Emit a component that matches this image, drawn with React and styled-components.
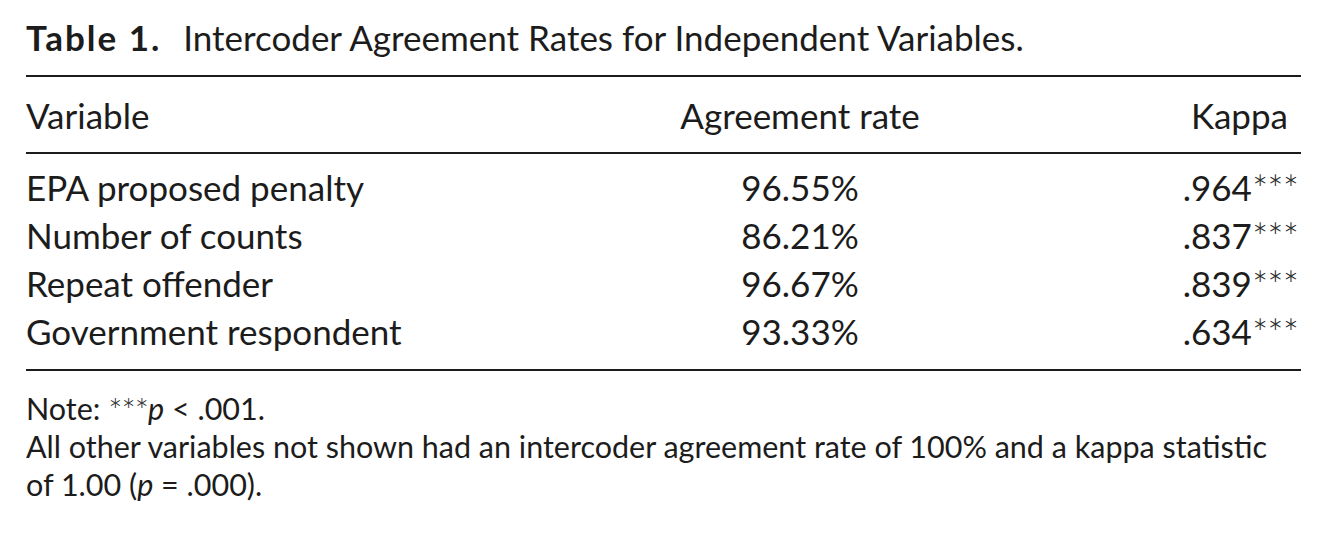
import styled, { createGlobalStyle } from 'styled-components';

const GlobalStyle = createGlobalStyle`
  body {
    margin: 0;
    background: #ffffff;
    color: #1c1c1c;
    font-family: Lato, "Open Sans", sans-serif;
  }
`;

const Page = styled.div`
  width: 1275px;
  padding: 13px 0 0 26px;
`;

const Caption = styled.div`
  font-size: 35px;
  line-height: 48px;
  margin-bottom: 14px;
  white-space: nowrap;
`;

const CaptionLabel = styled.span`
  font-weight: 700;
  letter-spacing: 2px;
  margin-right: 22px;
`;

const Table = styled.table`
  width: 100%;
  table-layout: fixed;
  border-collapse: collapse;
  border-top: 2px solid #1c1c1c;
  border-bottom: 2px solid #1c1c1c;
  font-size: 35px;
  line-height: 48px;
`;

const HeadRow = styled.tr`
  border-bottom: 2px solid #1c1c1c;
`;

const HeadCell = styled.th`
  font-weight: 400;
  white-space: nowrap;
  padding: 14px 0 13px;
  text-align: ${(p) => p.$align || 'left'};
  padding-right: ${(p) => (p.$align === 'right' ? '13px' : '0')};
  width: ${(p) => p.$width || 'auto'};
`;

const Cell = styled.td`
  padding: 0;
  white-space: nowrap;
  padding-top: ${(p) => (p.$first ? '9px' : '0')};
  padding-bottom: ${(p) => (p.$last ? '14px' : '0')};
  padding-right: ${(p) => (p.$align === 'right' ? '3px' : '0')};
  text-align: ${(p) => p.$align || 'left'};
`;

const Stars = styled.span`
  font-size: 1.1em;
  line-height: 1;
  font-weight: 300;
  letter-spacing: -1px;
  vertical-align: -0.08em;
`;

const Note = styled.div`
  margin-top: 18px;
  font-size: 30.5px;
  line-height: 38px;
  white-space: nowrap;
`;

const Ital = styled.i`
  font-style: italic;
`;

const rows = [
  ['EPA proposed penalty', '96.55%', '.964'],
  ['Number of counts', '86.21%', '.837'],
  ['Repeat offender', '96.67%', '.839'],
  ['Government respondent', '93.33%', '.634'],
];

export default function App() {
  return (
    <Page>
      <GlobalStyle />
      <Caption>
        <CaptionLabel>Table 1.</CaptionLabel>
        Intercoder Agreement Rates for Independent Variables.
      </Caption>
      <Table>
        <thead>
          <HeadRow>
            <HeadCell $width="654px">Variable</HeadCell>
            <HeadCell $align="center" $width="240px">Agreement rate</HeadCell>
            <HeadCell $align="right">Kappa</HeadCell>
          </HeadRow>
        </thead>
        <tbody>
          {rows.map((r, i) => (
            <tr key={r[0]}>
              <Cell $first={i === 0} $last={i === rows.length - 1}>{r[0]}</Cell>
              <Cell $first={i === 0} $last={i === rows.length - 1} $align="center">{r[1]}</Cell>
              <Cell $first={i === 0} $last={i === rows.length - 1} $align="right">
                {r[2]}<Stars>***</Stars>
              </Cell>
            </tr>
          ))}
        </tbody>
      </Table>
      <Note>
        Note: <Stars>***</Stars><Ital>p</Ital> &lt; .001.
        <br />
        All other variables not shown had an intercoder agreement rate of 100% and a kappa statistic
        <br />
        of 1.00 (<Ital>p</Ital> = .000).
      </Note>
    </Page>
  );
}
